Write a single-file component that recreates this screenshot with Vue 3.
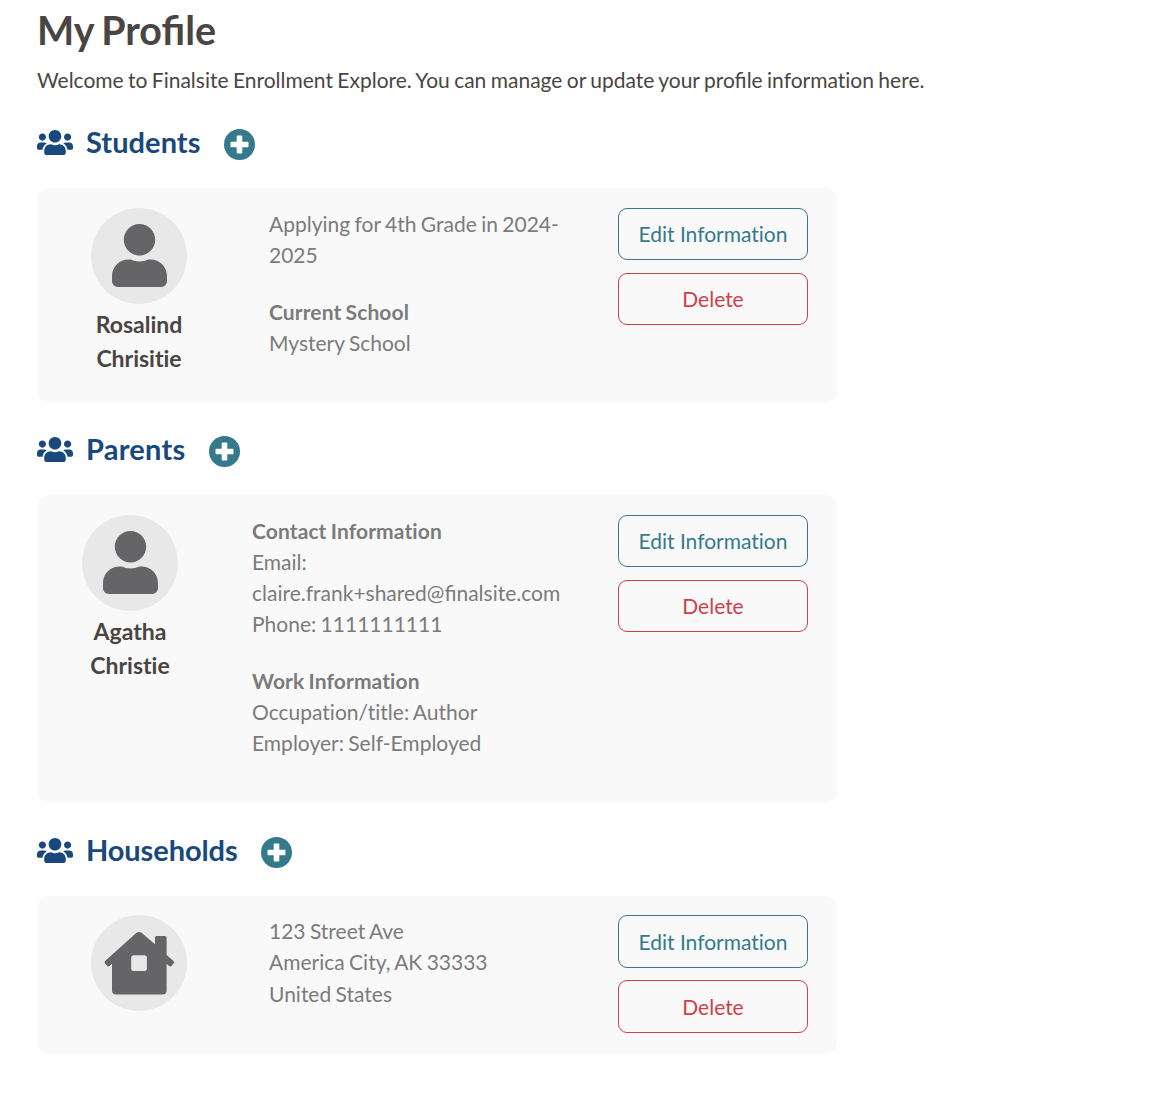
<script setup>
import { ref } from 'vue'

const sections = ref([
  {
    title: 'Students',
    type: 'student',
    name: 'Rosalind Chrisitie',
    groups: [
      { lines: ['Applying for 4th Grade in 2024-2025'] },
      { heading: 'Current School', lines: ['Mystery School'] }
    ]
  },
  {
    title: 'Parents',
    type: 'parent',
    name: 'Agatha Christie',
    groups: [
      {
        heading: 'Contact Information',
        lines: ['Email: claire.frank+shared@finalsite.com', 'Phone: 1111111111']
      },
      {
        heading: 'Work Information',
        lines: ['Occupation/title: Author', 'Employer: Self-Employed']
      }
    ]
  },
  {
    title: 'Households',
    type: 'household',
    groups: [{ lines: ['123 Street Ave', 'America City, AK 33333', 'United States'] }]
  }
])
</script>

<template>
  <main class="profile">
    <h1>My Profile</h1>
    <p class="intro">
      Welcome to Finalsite Enrollment Explore. You can manage or update your
      <span class="ligatures">profile</span> information here.
    </p>

    <section v-for="section in sections" :key="section.type" :class="section.type">
      <div class="section-header">
        <svg class="users-icon" viewBox="0 0 640 512">
          <path
            d="M96 224c35.3 0 64-28.7 64-64s-28.7-64-64-64-64 28.7-64 64 28.7 64 64 64zm448 0c35.3 0 64-28.7 64-64s-28.7-64-64-64-64 28.7-64 64 28.7 64 64 64zm32 32h-64c-17.6 0-33.5 7.1-45.1 18.6 40.3 22.1 68.9 62 75.1 109.4h66c17.7 0 32-14.3 32-32v-32c0-35.3-28.7-64-64-64zm-256 0c61.9 0 112-50.1 112-112S381.9 32 320 32 208 82.1 208 144s50.1 112 112 112zm76.8 32h-8.3c-20.8 10-43.9 16-68.5 16s-47.6-6-68.5-16h-8.3C179.6 288 128 339.6 128 403.2V432c0 26.5 21.5 48 48 48h288c26.5 0 48-21.5 48-48v-28.8c0-63.6-51.6-115.2-115.2-115.2zm-223.7-13.4C161.5 263.1 145.6 256 128 256H64c-35.3 0-64 28.7-64 64v32c0 17.7 14.3 32 32 32h65.9c6.3-47.4 34.9-87.3 75.2-109.4z"
          />
        </svg>
        <h2>{{ section.title }}</h2>
        <button class="add" :aria-label="'Add to ' + section.title">
          <svg viewBox="0 0 31 31">
            <circle cx="15.5" cy="15.5" r="15.5" fill="#35798d" />
            <path
              d="M13.5 6.5h4q.8 0 .8.8v5.4h5.4q.8 0 .8.8v4q0 .8-.8.8h-5.4v5.4q0 .8-.8.8h-4q-.8 0-.8-.8v-5.4H7.3q-.8 0-.8-.8v-4q0-.8.8-.8h5.4V7.3q0-.8.8-.8z"
              fill="#fff"
            />
          </svg>
        </button>
      </div>

      <div class="card">
        <div class="person">
          <div class="avatar">
            <svg v-if="section.type === 'household'" viewBox="0 0 96 96">
              <path
                fill-rule="evenodd"
                d="M45.2 17.9q2.8-1.8 5.6 0L64 29.3V22.5q0-1.5 1.5-1.5h8.6q1.5 0 1.5 1.5V40l6.9 5.9q1.1 1.1.2 2.3l-2.3 2.7q-1.1 1-2.3.1L75.6 48.8V75.5q0 4-4 4H25q-4 0-4-4V48.8l-2.5 2.2q-1.2.9-2.3-.1l-2.3-2.7q-.9-1.2.2-2.3zM42.7 40.2q-2.5 0-2.5 2.5v10.8q0 2.5 2.5 2.5h10.7q2.5 0 2.5-2.5V42.7q0-2.5-2.5-2.5z"
              />
            </svg>
            <svg v-else class="user-icon" viewBox="0 0 448 512">
              <path
                d="M224 256c70.7 0 128-57.3 128-128S294.7 0 224 0 96 57.3 96 128s57.3 128 128 128zm89.6 32h-16.7c-22.2 10.2-46.9 16-72.9 16s-50.6-5.8-72.9-16h-16.7C60.2 288 0 348.2 0 422.4V464c0 26.5 21.5 48 48 48h352c26.5 0 48-21.5 48-48v-41.6c0-74.2-60.2-134.4-134.4-134.4z"
              />
            </svg>
          </div>
          <p v-if="section.name" class="name">{{ section.name }}</p>
        </div>

        <div class="details">
          <div v-for="(group, i) in section.groups" :key="i" class="group">
            <strong v-if="group.heading">{{ group.heading }}</strong>
            <p
              v-for="line in group.lines"
              :key="line"
              :class="{ ligatures: line.includes('fi') }"
            >
              {{ line }}
            </p>
          </div>
        </div>

        <div class="actions">
          <button class="edit">Edit Information</button>
          <button class="delete">Delete</button>
        </div>
      </div>
    </section>
  </main>
</template>

<style>
body {
  background: #fff;
}
</style>

<style scoped>
.profile {
  padding: 6px 37px 0;
  font-family: Lato, sans-serif;
  font-size: 21px;
  font-variant-ligatures: no-common-ligatures;
  word-spacing: -1px;
  color: #4a4542;
}

h1,
h2,
p {
  margin: 0;
}

h1 {
  font-size: 39.4px;
  line-height: 48px;
  font-variant-ligatures: normal;
  word-spacing: -2px;
}

.ligatures {
  font-variant-ligatures: normal;
}

.intro {
  margin-top: 10px;
  line-height: 31px;
}

.section-header {
  display: flex;
  align-items: center;
  height: 93px;
}

.parent .section-header {
  margin-top: -1px;
}

.users-icon {
  width: 36px;
  height: 29px;
  margin-top: 2px;
  fill: #19497c;
}

h2 {
  margin: 0 23px 0 13px;
  font-size: 29px;
  letter-spacing: 0.06px;
  color: #19497c;
}

.parent h2 {
  letter-spacing: 0.25px;
}

.household h2 {
  letter-spacing: -0.1px;
}

.add {
  width: 31px;
  height: 31px;
  margin-top: 6px;
  padding: 0;
  border: none;
  background: none;
}

.add svg {
  display: block;
}

.card {
  box-sizing: border-box;
  display: grid;
  grid-template-columns: 164px 301px 190px;
  column-gap: 48px;
  width: 800px;
  height: 215px;
  padding: 20px;
  border-radius: 12px;
  background: #f9f9f9;
}

.parent .card {
  grid-template-columns: 146px 317px 190px;
  column-gap: 49px;
  height: 308px;
}

.household .card {
  height: 158px;
  padding-top: 19px;
}

.person {
  display: flex;
  flex-direction: column;
  align-items: center;
}

.avatar {
  display: flex;
  align-items: center;
  justify-content: center;
  width: 96px;
  height: 96px;
  border-radius: 50%;
  background: #e8e8e8;
  fill: #656567;
}

.user-icon {
  width: 55px;
  height: 63px;
  margin-bottom: 2px;
}

.name {
  width: 110px;
  margin-top: 3px;
  font-size: 23px;
  font-weight: bold;
  line-height: 34px;
  text-align: center;
}

.details {
  line-height: 31px;
  color: #7b7b7b;
}

.household .details {
  line-height: 31.3px;
}

.group {
  margin-bottom: 26px;
}

.group strong {
  display: block;
  letter-spacing: 0.1px;
}

.actions {
  display: flex;
  flex-direction: column;
  gap: 13px;
}

.household .actions {
  gap: 12px;
}

.actions button {
  box-sizing: border-box;
  height: 52px;
  padding: 0 0 2px;
  border: 1px solid;
  border-radius: 9px;
  background: none;
  font: inherit;
}

.household .actions button {
  height: 53px;
  padding-bottom: 0;
}

.actions .edit {
  color: #35798d;
}

.actions .delete {
  color: #ce3f4b;
}
</style>
